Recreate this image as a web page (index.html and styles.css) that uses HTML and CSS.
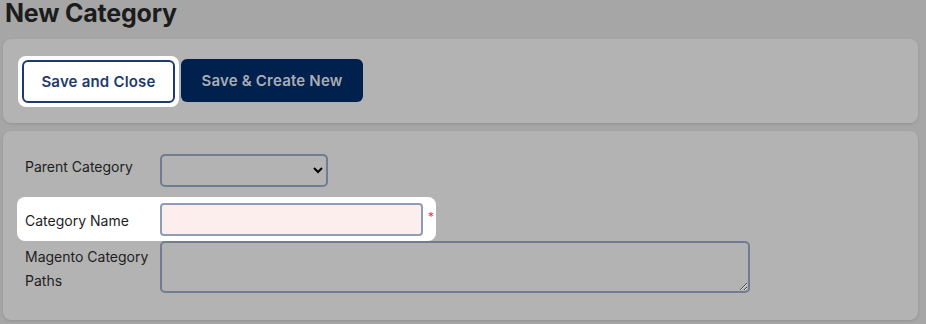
FILE: index.html
```
<html>

<head>
    <title>New Category</title>
    <link rel="stylesheet" href="styles.css">
</head>

<body>
    <div class="page">
        <h1 class="title">New Category</h1>

        <div class="card actions">
            <div class="spot spot-btn">
                <button class="btn btn-outline">Save and Close</button>
            </div>
            <button class="btn btn-solid">Save &amp; Create New</button>
        </div>

        <div class="card form">
            <div class="row">
                <label class="label label-top">Parent Category</label>
                <select class="select"></select>
            </div>

            <!-- highlighted row -->
            <div class="spot spot-row">
                <div class="row">
                    <label class="label label-mid">Category Name</label>
                    <input type="text" class="input">
                    <span class="req">*</span>
                </div>
            </div>

            <div class="row">
                <label class="label label-wrap">Magento Category Paths</label>
                <textarea class="textarea"></textarea>
            </div>
        </div>
    </div>
</body>

</html>
```

FILE: styles.css
```
* {
    box-sizing: border-box;
    margin: 0;
    padding: 0;
}

body {
    background-color: #a6a6a6;
    font-family: 'Inter', 'Liberation Sans', sans-serif;
    overflow: hidden;
}

.page {
    width: 926px;
    padding: 0 8px 0 3px;
}

.title {
    color: #1c1c1c;
    font-size: 25px;
    font-weight: 700;
    line-height: 26px;
    height: 39px;
    padding-left: 2px;
    letter-spacing: -0.2px;
}

.card {
    background: #b3b3b3;
    border-radius: 8px;
    box-shadow: 0 1px 3px rgba(0, 0, 0, 0.12);
}

/* button bar */
.actions {
    height: 84px;
    display: flex;
    align-items: flex-start;
    gap: 2px;
    padding: 17px 0 0 15px;
}

.spot {
    background: #ffffff;
    border-radius: 8px;
}

.spot-btn {
    padding: 4px;
}

.btn {
    height: 43px;
    border-radius: 6px;
    font-family: 'Inter', 'Liberation Sans', sans-serif;
    font-size: 15px;
    font-weight: 600;
    cursor: pointer;
    letter-spacing: 0.2px;
}

.btn-outline {
    width: 153px;
    background: #ffffff;
    border: 2px solid #1d3a70;
    color: #1d3a70;
}

.btn-solid {
    width: 182px;
    margin-top: 3px;
    background: #00204d;
    border: none;
    color: #a9adb6;
}

/* form */
.form {
    margin-top: 8px;
    height: 189px;
    padding: 23px 0 0 14px;
}

.row {
    display: flex;
    align-items: flex-start;
}

.form > .row {
    padding-left: 8px;
}

.label {
    width: 128px;
    margin-right: 7px;
    color: #1e1e1e;
    font-size: 14px;
    line-height: 24px;
}

.label-top {
    padding-top: 1px;
}

.label-mid {
    padding-top: 6px;
}

.label-wrap {
    padding-top: 4px;
}

.select {
    width: 168px;
    height: 33px;
    border: 2px solid #6f7c92;
    border-radius: 5px;
    background: transparent;
    font-family: 'Inter', sans-serif;
}

.spot-row {
    margin: 10px 0 0 0;
    width: 419px;
    padding: 6px 0 5px 8px;
}

.input {
    width: 263px;
    height: 33px;
    border: 2px solid #8f9cb4;
    border-radius: 4px;
    background: #fdeeee;
}

.req {
    color: #ff3030;
    font-size: 12px;
    margin-left: 5px;
    line-height: 12px;
    padding-top: 8px;
}

.textarea {
    width: 590px;
    height: 52px;
    border: 2px solid #6f7c92;
    border-radius: 5px;
    background: transparent;
}
```
